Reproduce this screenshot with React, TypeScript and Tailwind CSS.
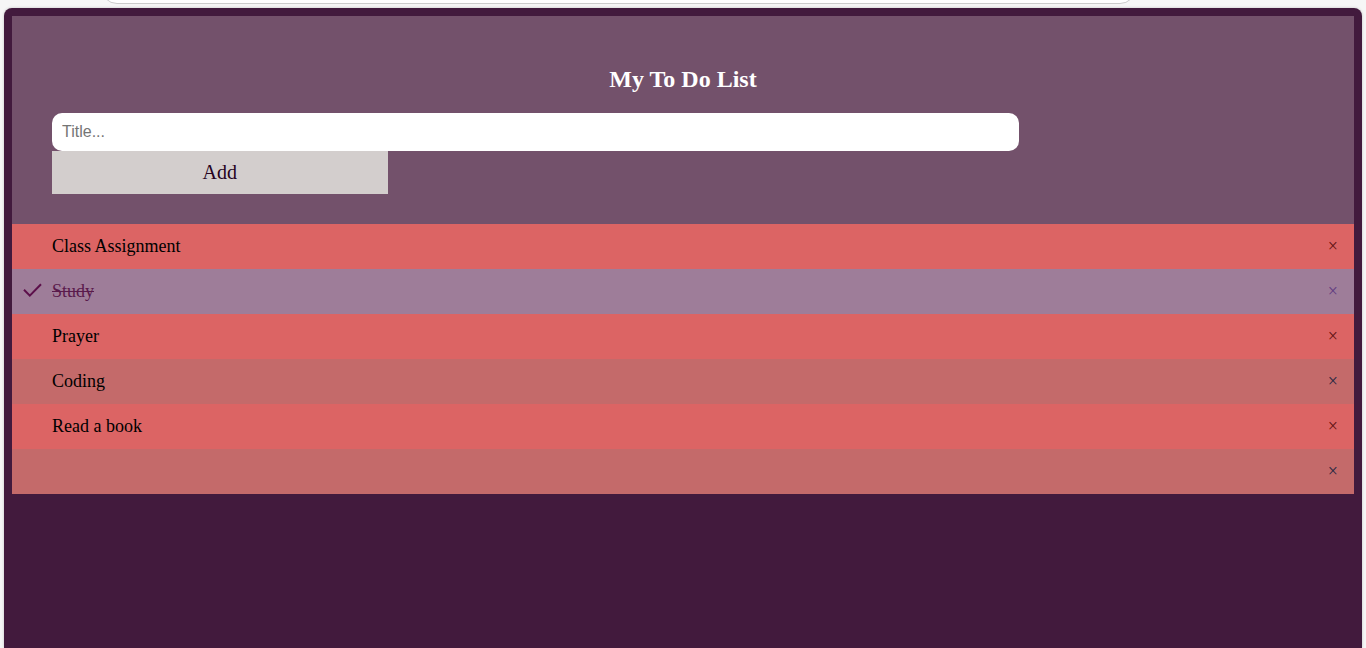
import { useState } from "react";
import type { FormEvent } from "react";

type Item = { id: number; text: string; done: boolean };

const initialItems: Item[] = [
  { id: 1, text: "Class Assignment", done: false },
  { id: 2, text: "Study", done: true },
  { id: 3, text: "Prayer", done: false },
  { id: 4, text: "Coding", done: false },
  { id: 5, text: "Read a book", done: false },
  { id: 6, text: "", done: false },
];

function rowColors(item: Item, index: number) {
  if (item.done) return "bg-[#9e7d99] text-[#5a1a4c]";
  return index % 2 === 0 ? "bg-[#dc6464] text-black" : "bg-[#c46a6a] text-black";
}

function closeColor(item: Item, index: number) {
  if (item.done) return "text-[#5f3a80]";
  return index % 2 === 0 ? "text-[#5c1010]" : "text-[#1f2540]";
}

function CheckMark() {
  return (
    <svg viewBox="0 0 20 16" className="h-4 w-5" fill="none" stroke="#5c0f4a" strokeWidth="2" aria-hidden="true">
      <path d="M2 6.8 L7.8 12.6 L19 1.2" />
    </svg>
  );
}

export default function App() {
  const [items, setItems] = useState(initialItems);
  const [title, setTitle] = useState("");

  const add = (event: FormEvent) => {
    event.preventDefault();
    setItems([...items, { id: Date.now(), text: title, done: false }]);
    setTitle("");
  };

  const toggle = (id: number) =>
    setItems(items.map((item) => (item.id === id ? { ...item, done: !item.done } : item)));

  const remove = (id: number) => setItems(items.filter((item) => item.id !== id));

  return (
    <div className="flex min-h-screen flex-col bg-[#f6f6f6] px-1 font-['Liberation_Serif',serif]">
      <div className="flex h-2 items-end overflow-hidden pr-[226px] pb-1 pl-[97px]">
        <div className="h-8 grow rounded-full border border-[#cccccc] bg-white" />
      </div>

      <main className="grow rounded-t-lg bg-[#421a3d] p-2 shadow-[0_0_3px_rgba(0,0,0,0.2)]">
        <form onSubmit={add} className="bg-[#73516b] px-10 pt-[50px] pb-[30px]">
          <h1 className="mb-5 text-center text-2xl leading-[27px] font-bold text-white">My To Do List</h1>
          <input
            type="text"
            aria-label="Title"
            placeholder="Title..."
            value={title}
            onChange={(event) => setTitle(event.target.value)}
            className="block h-[38px] w-[calc(75%+20px)] rounded-[10px] bg-white px-[10px] font-['Liberation_Sans',sans-serif] text-base text-black outline-none placeholder:text-[#757575]"
          />
          <button
            type="submit"
            className="block w-[calc(25%+20px)] cursor-pointer bg-[#d3cecd] py-[10px] text-center text-xl leading-[23px] text-[#26041f]"
          >
            Add
          </button>
        </form>

        <ul>
          {items.map((item, index) => (
            <li key={item.id} className={`flex h-[45px] items-center pb-0.5 text-lg leading-5 ${rowColors(item, index)}`}>
              <button
                type="button"
                onClick={() => toggle(item.id)}
                aria-pressed={item.done}
                aria-label={item.text || "Untitled item"}
                className="flex h-full grow cursor-pointer items-center text-left"
              >
                <span className="flex w-10 justify-center">{item.done && <CheckMark />}</span>
                <span className={item.done ? "line-through" : ""}>{item.text}</span>
              </button>
              <button
                type="button"
                onClick={() => remove(item.id)}
                aria-label="Remove"
                className={`h-full cursor-pointer px-4 ${closeColor(item, index)}`}
              >
                ×
              </button>
            </li>
          ))}
        </ul>
      </main>
    </div>
  );
}
